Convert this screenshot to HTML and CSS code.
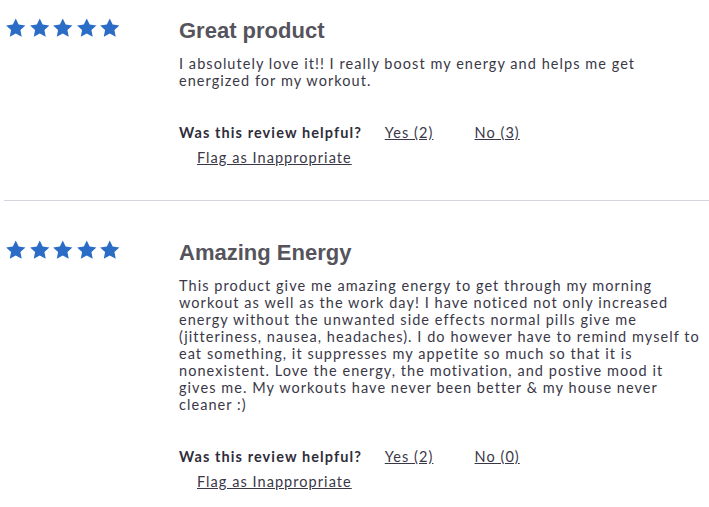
FILE: index.html
```html
<!DOCTYPE html>
<html lang="en">
<head>
    <meta charset="UTF-8">
    <meta name="viewport" content="width=device-width, initial-scale=1.0">
    <title>Reviews</title>
    <link rel="stylesheet" href="styles.css">
</head>
<body>

<div class="review-list">

    <div class="review">
        <div class="stars">
            <svg viewBox="0 0 24 24"><polygon points="12,1.5 15.2,8.3 22.5,9.2 17.1,14.2 18.5,21.5 12,17.9 5.5,21.5 6.9,14.2 1.5,9.2 8.8,8.3"/></svg>
            <svg viewBox="0 0 24 24"><polygon points="12,1.5 15.2,8.3 22.5,9.2 17.1,14.2 18.5,21.5 12,17.9 5.5,21.5 6.9,14.2 1.5,9.2 8.8,8.3"/></svg>
            <svg viewBox="0 0 24 24"><polygon points="12,1.5 15.2,8.3 22.5,9.2 17.1,14.2 18.5,21.5 12,17.9 5.5,21.5 6.9,14.2 1.5,9.2 8.8,8.3"/></svg>
            <svg viewBox="0 0 24 24"><polygon points="12,1.5 15.2,8.3 22.5,9.2 17.1,14.2 18.5,21.5 12,17.9 5.5,21.5 6.9,14.2 1.5,9.2 8.8,8.3"/></svg>
            <svg viewBox="0 0 24 24"><polygon points="12,1.5 15.2,8.3 22.5,9.2 17.1,14.2 18.5,21.5 12,17.9 5.5,21.5 6.9,14.2 1.5,9.2 8.8,8.3"/></svg>
        </div>
        <div class="review-body">
            <h3 class="review-title">Great product</h3>
            <p class="review-text">I absolutely love it!! I really boost my energy and helps me get energized for my workout.</p>
            <div class="helpful">
                <span class="helpful-label">Was this review helpful?</span>
                <a href="#" class="vote-yes">Yes (2)</a>
                <a href="#" class="vote-no">No (3)</a>
            </div>
            <a href="#" class="flag">Flag as Inappropriate</a>
        </div>
    </div>

    <div class="review">
        <div class="stars">
            <svg viewBox="0 0 24 24"><polygon points="12,1.5 15.2,8.3 22.5,9.2 17.1,14.2 18.5,21.5 12,17.9 5.5,21.5 6.9,14.2 1.5,9.2 8.8,8.3"/></svg>
            <svg viewBox="0 0 24 24"><polygon points="12,1.5 15.2,8.3 22.5,9.2 17.1,14.2 18.5,21.5 12,17.9 5.5,21.5 6.9,14.2 1.5,9.2 8.8,8.3"/></svg>
            <svg viewBox="0 0 24 24"><polygon points="12,1.5 15.2,8.3 22.5,9.2 17.1,14.2 18.5,21.5 12,17.9 5.5,21.5 6.9,14.2 1.5,9.2 8.8,8.3"/></svg>
            <svg viewBox="0 0 24 24"><polygon points="12,1.5 15.2,8.3 22.5,9.2 17.1,14.2 18.5,21.5 12,17.9 5.5,21.5 6.9,14.2 1.5,9.2 8.8,8.3"/></svg>
            <svg viewBox="0 0 24 24"><polygon points="12,1.5 15.2,8.3 22.5,9.2 17.1,14.2 18.5,21.5 12,17.9 5.5,21.5 6.9,14.2 1.5,9.2 8.8,8.3"/></svg>
        </div>
        <div class="review-body">
            <h3 class="review-title">Amazing Energy</h3>
            <p class="review-text">This product give me amazing energy to get through my morning workout as well as the work day! I have noticed not only increased energy without the unwanted side effects normal pills give me (jitteriness, nausea, headaches). I do however have to remind myself to eat something, it suppresses my appetite so much so that it is nonexistent. Love the energy, the motivation, and postive mood it gives me. My workouts have never been better &amp; my house never cleaner :)</p>
            <div class="helpful">
                <span class="helpful-label">Was this review helpful?</span>
                <a href="#" class="vote-yes">Yes (2)</a>
                <a href="#" class="vote-no">No (0)</a>
            </div>
            <a href="#" class="flag">Flag as Inappropriate</a>
        </div>
    </div>

</div>

</body>
</html>
```

FILE: styles.css
```css
body {
    font-family: Lato, "Open Sans", Arial, sans-serif;
    margin: 0;
    padding: 0;
    background-color: white;
    color: #3a3847;
}

.review-list {
    padding-left: 4px;
}

.review {
    display: flex;
    padding: 39px 0 34px 0;
    border-bottom: 1px solid #d6d5de;
}

.review:first-child {
    padding-top: 18px;
}

.review:last-child {
    border-bottom: none;
}

.stars {
    display: flex;
    width: 175px;
    flex-shrink: 0;
    height: 22px;
    margin-top: -1px;
}

.stars svg {
    width: 23.5px;
    height: 22px;
    fill: #2a6cc6;
}

.review-body {
    flex: 1;
    padding-right: 7px;
}

.review-title {
    font-family: "Liberation Sans", Arial, sans-serif;
    font-size: 22px;
    line-height: 26px;
    font-weight: bold;
    color: #55545c;
    margin: 0 0 11px 0;
}

.review-text {
    font-size: 14.5px;
    line-height: 17px;
    letter-spacing: 1.05px;
    margin: 0 0 35px 0;
}

.helpful {
    font-size: 14.5px;
    line-height: 17px;
    letter-spacing: 1.05px;
    margin-bottom: 6px;
}

.helpful-label {
    display: inline-block;
    width: 201px;
    font-weight: bold;
    letter-spacing: 1.1px;
    color: #2f2d3a;
}

.helpful a {
    color: #3a3847;
}

.vote-yes {
    display: inline-block;
    width: 85px;
}

.flag {
    display: inline-block;
    margin-left: 18px;
    font-size: 14.5px;
    line-height: 17px;
    letter-spacing: 1.05px;
    color: #3a3847;
}
```
